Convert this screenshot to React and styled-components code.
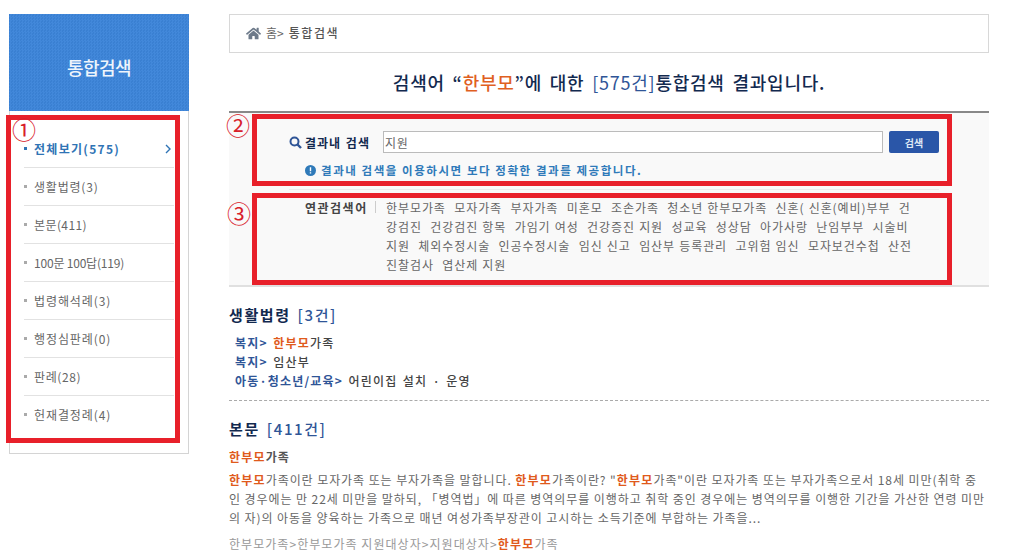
import styled, { createGlobalStyle } from "styled-components"
import { FaHome } from "react-icons/fa"

const GlobalStyle = createGlobalStyle`
html, body {
    margin: 0;
    padding: 0;
    height: 558px;
    overflow: hidden;
    background: white;
    font-family: "Noto Sans CJK KR", "Liberation Sans", sans-serif;
    font-size: 12px;
    color: #555;
}
`

const Page = styled.div`
display: flex;
align-items: flex-start;
position: relative;
padding: 14px 0 0 9px;
`

const Sidebar = styled.aside`
width: 180px;
flex-shrink: 0;
margin-right: 40px;
`

const SideTitle = styled.div`
display: flex;
align-items: center;
justify-content: center;
height: 97px;
box-sizing: border-box;
padding-top: 8px;
background-color: #3d85d8;
background-image: conic-gradient(#4288da 25%, #3a80d2 0 50%, #4288da 0 75%, #3a80d2 0);
background-size: 3px 3px;
color: #eef5fc;
font-size: 18px;
font-weight: 500;
letter-spacing: -0.5px;
`

const SideMenu = styled.ul`
list-style: none;
margin: 0;
padding: 19px 14px 19px 14px;
height: 343px;
box-sizing: border-box;
border: 1px solid #d4d4d4;
border-top: none;
`

const SideItem = styled.li`
display: flex;
align-items: center;
height: 38px;
box-sizing: border-box;
padding-left: 10px;
position: relative;
border-bottom: ${(p) => (p.$last ? "none" : "1px solid #e2e2e2")};
color: ${(p) => (p.$active ? "#2f74b5" : "#666")};
font-weight: ${(p) => (p.$active ? 700 : 400)};
font-size: 12px;
line-height: 36px;
letter-spacing: ${(p) => p.$ls}px;

&::before {
    content: "";
    position: absolute;
    left: 0;
    top: 17px;
    width: 3px;
    height: 3px;
    background: ${(p) => (p.$active ? "#2f74b5" : "#aaa")};
}

svg {
    margin-left: auto;
    margin-right: 3px;
}
`

const Main = styled.main`
width: 760px;
flex-shrink: 0;
`

const Crumb = styled.div`
display: flex;
align-items: center;
height: 39px;
box-sizing: border-box;
border: 1px solid #d8d8d8;
padding: 0 0 2px 16px;
color: #666;
font-size: 12px;

svg {
    color: #6d7a8a;
    margin: 2px 5px 0 0;
}

b {
    font-weight: 500;
    margin-left: 5px;
    color: #555;
    letter-spacing: 1.6px;
}
`

const Title = styled.h1`
margin: 0;
height: 58px;
display: flex;
align-items: center;
justify-content: center;
font-size: 18px;
font-weight: 500;
letter-spacing: 0.75px;
word-spacing: 3px;
color: #12294f;
white-space: pre;

em {
    font-style: normal;
    color: #e0601f;
}

span {
    color: #2f5597;
    font-weight: 400;
}
`

const SearchPanel = styled.section`
border-top: 2px solid #888;
border-bottom: 2px solid #e0e0e0;
background: #f9f9f9;
height: 176px;
box-sizing: border-box;
`

const SearchRow = styled.div`
display: flex;
align-items: center;
height: 22px;
margin: 18px 50px 0 60px;

svg {
    flex-shrink: 0;
}
`

const SearchLabel = styled.label`
font-weight: 700;
color: #12294f;
margin: 0 8px 0 3px;
width: 70px;
white-space: nowrap;
letter-spacing: 1px;
word-spacing: 1px;
`

const SearchInput = styled.input`
flex: 1;
min-width: 0;
height: 22px;
box-sizing: border-box;
border: 1px solid #bbb;
padding: 0 1px;
font: inherit;
letter-spacing: 0.8px;
color: #666;
background: white;
outline: none;
`

const SearchButton = styled.button`
width: 50px;
height: 22px;
margin-left: 6px;
padding: 0;
border: none;
border-radius: 2px;
background: #2a56a8;
color: #dfe8f6;
font: inherit;
font-size: 10px;
font-weight: 700;
`

const Notice = styled.p`
display: flex;
align-items: center;
gap: 5px;
margin: 9px 0 0 76px;
height: 16px;
color: #2f7ab9;
font-size: 11.5px;
font-weight: 700;
letter-spacing: 1.55px;
white-space: nowrap;
`

const Related = styled.div`
display: flex;
margin: 11px 0 0 60px;
padding: 8px 0 0 16px;
border-top: 1px solid #eaeaea;
width: 650px;
box-sizing: border-box;
`

const RelatedLabel = styled.div`
width: 70px;
flex-shrink: 0;
line-height: 19px;
font-weight: 700;
color: #444;
position: relative;
white-space: nowrap;
letter-spacing: 1.5px;

&::after {
    content: "";
    position: absolute;
    left: 70px;
    top: 3px;
    width: 1px;
    height: 12px;
    background: #ccc;
}
`

const RelatedWords = styled.div`
margin-left: 11px;
color: #666;
letter-spacing: 0.92px;
word-spacing: 0.6px;
`

const Line = styled.div`
height: 19px;
line-height: 19px;
white-space: pre;
`

const Section = styled.section`
padding-top: ${(p) => p.$top}px;
border-bottom: ${(p) => (p.$dashed ? "1px dashed #aaa" : "none")};
height: ${(p) => p.$h}px;
box-sizing: border-box;
`

const SectionTitle = styled.h2`
margin: 0;
height: 20px;
line-height: 20px;
font-size: 15px;
font-weight: 700;
letter-spacing: 1.6px;
word-spacing: 2px;
color: #12294f;

span {
    color: #2f5597;
    font-weight: 500;
}
`

const LawList = styled.div`
margin: 8px 0 0 6px;
font-weight: 500;
color: #444;
letter-spacing: 1.2px;
word-spacing: 1.5px;

a {
    color: #2f5597;
    font-weight: 700;
}
`

const Hit = styled.strong`
color: #e05a1c;
font-weight: 700;
letter-spacing: 1.2px;
`

const DocTitle = styled.div`
height: 19px;
line-height: 19px;
margin-top: 8px;
font-weight: 700;
color: #555;
letter-spacing: 1px;
`

const DocBody = styled.div`
margin-top: 4px;
color: #666;
letter-spacing: 0.92px;
`

const DocPath = styled.div`
margin-top: 7px;
height: 19px;
line-height: 19px;
color: #999;
white-space: pre;
letter-spacing: 1.05px;
`

const Mark = styled.div`
position: absolute;
box-sizing: border-box;
border: 5px solid #e8202a;
pointer-events: none;
left: ${(p) => p.$x}px;
top: ${(p) => p.$y}px;
width: ${(p) => p.$w}px;
height: ${(p) => p.$h}px;
`

const MarkNum = styled.span`
position: absolute;
left: ${(p) => p.$x}px;
top: ${(p) => p.$y}px;
color: #d8202a;
font-family: "Liberation Serif", "Noto Sans CJK KR", serif;
font-size: 24px;
line-height: 24px;
`

const menu = [
    { name: "전체보기(575)", ls: 1.3, active: true },
    { name: "생활법령(3)", ls: 0.8 },
    { name: "본문(411)", ls: 0.4 },
    { name: "100문 100답(119)", ls: -0.2 },
    { name: "법령해석례(3)", ls: 0.9 },
    { name: "행정심판례(0)", ls: 0.9 },
    { name: "판례(28)", ls: 0.6 },
    { name: "헌재결정례(4)", ls: 0.9 },
]

const related = [
    "한부모가족  모자가족  부자가족  미혼모  조손가족  청소년 한부모가족  신혼( 신혼(예비)부부  건",
    "강검진  건강검진 항목  가임기 여성  건강증진 지원  성교육  성상담  아가사랑  난임부부  시술비",
    "지원  체외수정시술  인공수정시술  임신 신고  임산부 등록관리  고위험 임신  모자보건수첩  산전",
    "진찰검사  엽산제 지원",
]

function SearchIcon() {
    return (
        <svg width="13" height="13" viewBox="0 0 13 13" fill="none" stroke="#2f5597">
            <circle cx="5.5" cy="5.5" r="4" strokeWidth="2" />
            <path d="M8.5 8.5L12 12" strokeWidth="2.4" />
        </svg>
    )
}

function InfoIcon() {
    return (
        <svg width="11" height="11" viewBox="0 0 11 11">
            <circle cx="5.5" cy="5.5" r="5.5" fill="#2f7ab9" />
            <path d="M4.8 2.2h1.4v4H4.8zM4.8 7.2h1.4v1.4H4.8z" fill="white" />
        </svg>
    )
}

function Chevron() {
    return (
        <svg width="6" height="10" viewBox="0 0 6 10" fill="none" stroke="#2f74b5" strokeWidth="1.4">
            <path d="M1 1l4 4-4 4" />
        </svg>
    )
}

export default function App() {
    return (
        <Page>
            <GlobalStyle />
            <Sidebar>
                <SideTitle>통합검색</SideTitle>
                <SideMenu>
                    {menu.map((item, i) => (
                        <SideItem key={item.name} $active={item.active} $ls={item.ls} $last={i === menu.length - 1}>
                            {item.name}
                            {item.active && <Chevron />}
                        </SideItem>
                    ))}
                </SideMenu>
            </Sidebar>

            <Main>
                <Crumb>
                    <FaHome size={15} />
                    홈&gt;
                    <b>통합검색</b>
                </Crumb>
                <Title>
                    검색어 “<em>한부모</em>”에 대한 <span>[575건]</span>통합검색 결과입니다.
                </Title>

                <SearchPanel>
                    <SearchRow>
                        <SearchIcon />
                        <SearchLabel>결과내 검색</SearchLabel>
                        <SearchInput defaultValue="지원" />
                        <SearchButton>검색</SearchButton>
                    </SearchRow>
                    <Notice>
                        <InfoIcon />
                        결과내 검색을 이용하시면 보다 정확한 결과를 제공합니다.
                    </Notice>
                    <Related>
                        <RelatedLabel>연관검색어</RelatedLabel>
                        <RelatedWords>
                            {related.map((line) => (
                                <Line key={line}>{line}</Line>
                            ))}
                        </RelatedWords>
                    </Related>
                </SearchPanel>

                <Section $top={18} $h={114} $dashed>
                    <SectionTitle>
                        생활법령 <span>[3건]</span>
                    </SectionTitle>
                    <LawList>
                        <Line>
                            <a>복지&gt;</a> <Hit>한부모</Hit>가족
                        </Line>
                        <Line>
                            <a>복지&gt;</a> 임산부
                        </Line>
                        <Line>
                            <a>아동·청소년/교육&gt;</a> 어린이집 설치 · 운영
                        </Line>
                    </LawList>
                </Section>

                <Section $top={18} $h={156}>
                    <SectionTitle>
                        본문 <span>[411건]</span>
                    </SectionTitle>
                    <DocTitle>
                        <Hit>한부모</Hit>가족
                    </DocTitle>
                    <DocBody>
                        <Line>
                            <Hit>한부모</Hit>가족이란 모자가족 또는 부자가족을 말합니다. <Hit>한부모</Hit>가족이란? "<Hit>한부모</Hit>가족"이란 모자가족 또는 부자가족으로서 18세 미만(취학 중
                        </Line>
                        <Line>인 경우에는 만 22세 미만을 말하되, 「병역법」에 따른 병역의무를 이행하고 취학 중인 경우에는 병역의무를 이행한 기간을 가산한 연령 미만</Line>
                        <Line>의 자)의 아동을 양육하는 가족으로 매년 여성가족부장관이 고시하는 소득기준에 부합하는 가족을...</Line>
                    </DocBody>
                    <DocPath>
                        한부모가족&gt;한부모가족 지원대상자&gt;지원대상자&gt;<Hit>한부모</Hit>가족
                    </DocPath>
                </Section>
            </Main>

            <Mark $x={6} $y={115} $w={174} $h={328} />
            <MarkNum $x={12} $y={119}>①</MarkNum>
            <Mark $x={252} $y={114} $w={700} $h={72} />
            <MarkNum $x={226} $y={115}>②</MarkNum>
            <Mark $x={252} $y={193} $w={700} $h={92} />
            <MarkNum $x={227} $y={203}>③</MarkNum>
        </Page>
    )
}
